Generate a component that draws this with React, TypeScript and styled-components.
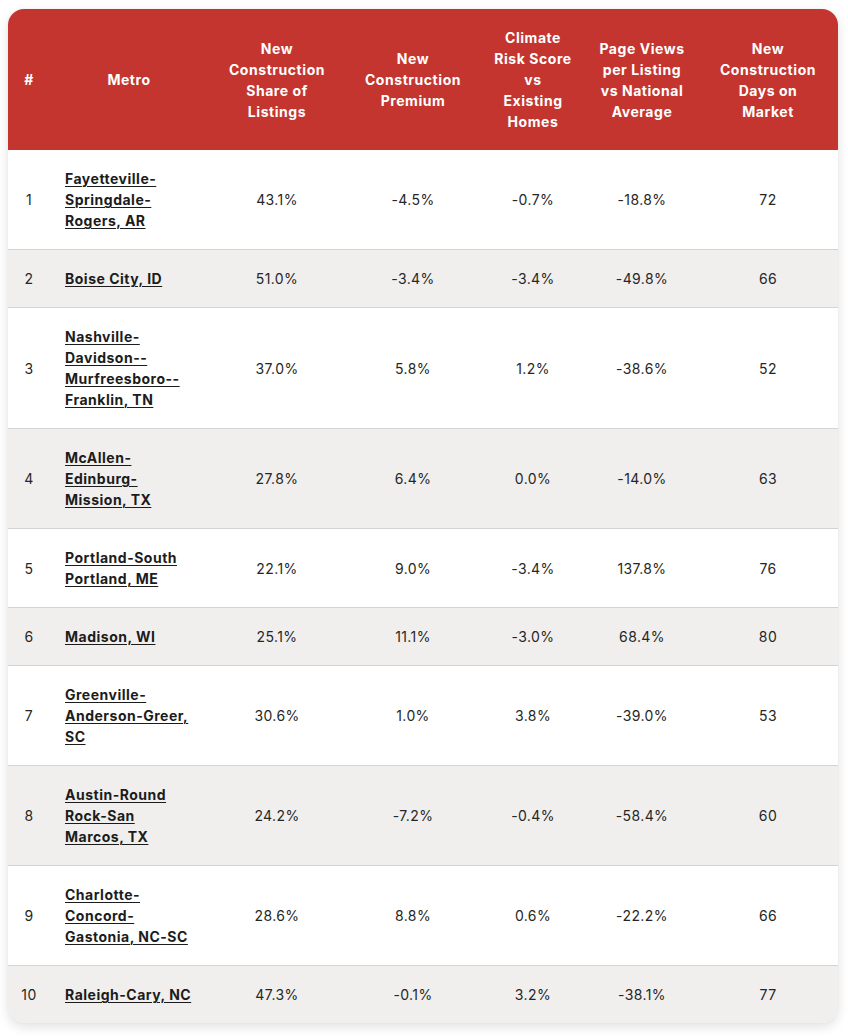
import React from "react";
import styled, { createGlobalStyle } from "styled-components";

const GlobalStyle = createGlobalStyle`
  html, body { margin: 0; padding: 0; background: #ffffff; }
  body { font-family: Inter, "Noto Sans", "Liberation Sans", sans-serif; color: #222; }
`;

const Page = styled.div`
  padding: 9px 10px 12px 8px;
`;

const Card = styled.div`
  width: 830px;
  border-radius: 16px;
  overflow: hidden;
  background: #fff;
  box-shadow: 0 4px 12px rgba(0, 0, 0, 0.12), 0 0 2px rgba(0, 0, 0, 0.06);
`;

const Table = styled.table`
  width: 830px;
  border-collapse: collapse;
  table-layout: fixed;
  font-size: 14px;
  line-height: 21px;
`;

const HeadCell = styled.th<{ $w: number; $px: number }>`
  box-sizing: border-box;
  width: ${(p) => p.$w}px;
  background: #c4352f;
  color: #fff;
  font-weight: 700;
  font-size: 14px;
  line-height: 21px;
  padding: 18px ${(p) => p.$px}px;
  text-align: center;
  vertical-align: middle;
  letter-spacing: 0.55px;
`;

const Row = styled.tr<{ $alt: boolean }>`
  background: ${(p) => (p.$alt ? "#f0efee" : "#ffffff")};
  & + & { border-top: 1px solid #d3d3d3; }
`;

const Cell = styled.td`
  box-sizing: border-box;
  padding: 18px 8px;
  text-align: center;
  vertical-align: middle;
  color: #262626;
  letter-spacing: 0.4px;
`;

const MetroCell = styled.td`
  box-sizing: border-box;
  padding: 18px 13px 18px 15px;
  text-align: left;
  vertical-align: middle;
`;

const MetroLink = styled.a`
  color: #1c1c1c;
  font-weight: 700;
  letter-spacing: 0.5px;
  text-decoration: underline;
  text-underline-offset: 2px;
  text-decoration-thickness: 1px;
`;

const cols = [
  { label: "#", w: 42, px: 14 },
  { label: "Metro", w: 158, px: 14 },
  { label: "New Construction Share of Listings", w: 138, px: 14 },
  { label: "New Construction Premium", w: 134, px: 14 },
  { label: "Climate Risk Score vs Existing Homes", w: 106, px: 14 },
  { label: "Page Views per Listing vs National Average", w: 112, px: 9 },
  { label: "New Construction Days on Market", w: 140, px: 14 },
];

const rows: [string, string, string, string, string, string][] = [
  ["Fayetteville-Springdale-Rogers, AR", "43.1%", "-4.5%", "-0.7%", "-18.8%", "72"],
  ["Boise City, ID", "51.0%", "-3.4%", "-3.4%", "-49.8%", "66"],
  ["Nashville-Davidson--Murfreesboro--Franklin, TN", "37.0%", "5.8%", "1.2%", "-38.6%", "52"],
  ["McAllen-Edinburg-Mission, TX", "27.8%", "6.4%", "0.0%", "-14.0%", "63"],
  ["Portland-South Portland, ME", "22.1%", "9.0%", "-3.4%", "137.8%", "76"],
  ["Madison, WI", "25.1%", "11.1%", "-3.0%", "68.4%", "80"],
  ["Greenville-Anderson-Greer, SC", "30.6%", "1.0%", "3.8%", "-39.0%", "53"],
  ["Austin-Round Rock-San Marcos, TX", "24.2%", "-7.2%", "-0.4%", "-58.4%", "60"],
  ["Charlotte-Concord-Gastonia, NC-SC", "28.6%", "8.8%", "0.6%", "-22.2%", "66"],
  ["Raleigh-Cary, NC", "47.3%", "-0.1%", "3.2%", "-38.1%", "77"],
];

export default function App() {
  return (
    <>
      <GlobalStyle />
      <Page>
        <Card>
          <Table>
            <thead>
              <tr>
                {cols.map((c) => (
                  <HeadCell key={c.label} $w={c.w} $px={c.px}>
                    {c.label}
                  </HeadCell>
                ))}
              </tr>
            </thead>
            <tbody>
              {rows.map((r, i) => (
                <Row key={r[0]} $alt={i % 2 === 1}>
                  <Cell>{i + 1}</Cell>
                  <MetroCell>
                    <MetroLink href="#">{r[0]}</MetroLink>
                  </MetroCell>
                  <Cell>{r[1]}</Cell>
                  <Cell>{r[2]}</Cell>
                  <Cell>{r[3]}</Cell>
                  <Cell>{r[4]}</Cell>
                  <Cell>{r[5]}</Cell>
                </Row>
              ))}
            </tbody>
          </Table>
        </Card>
      </Page>
    </>
  );
}
